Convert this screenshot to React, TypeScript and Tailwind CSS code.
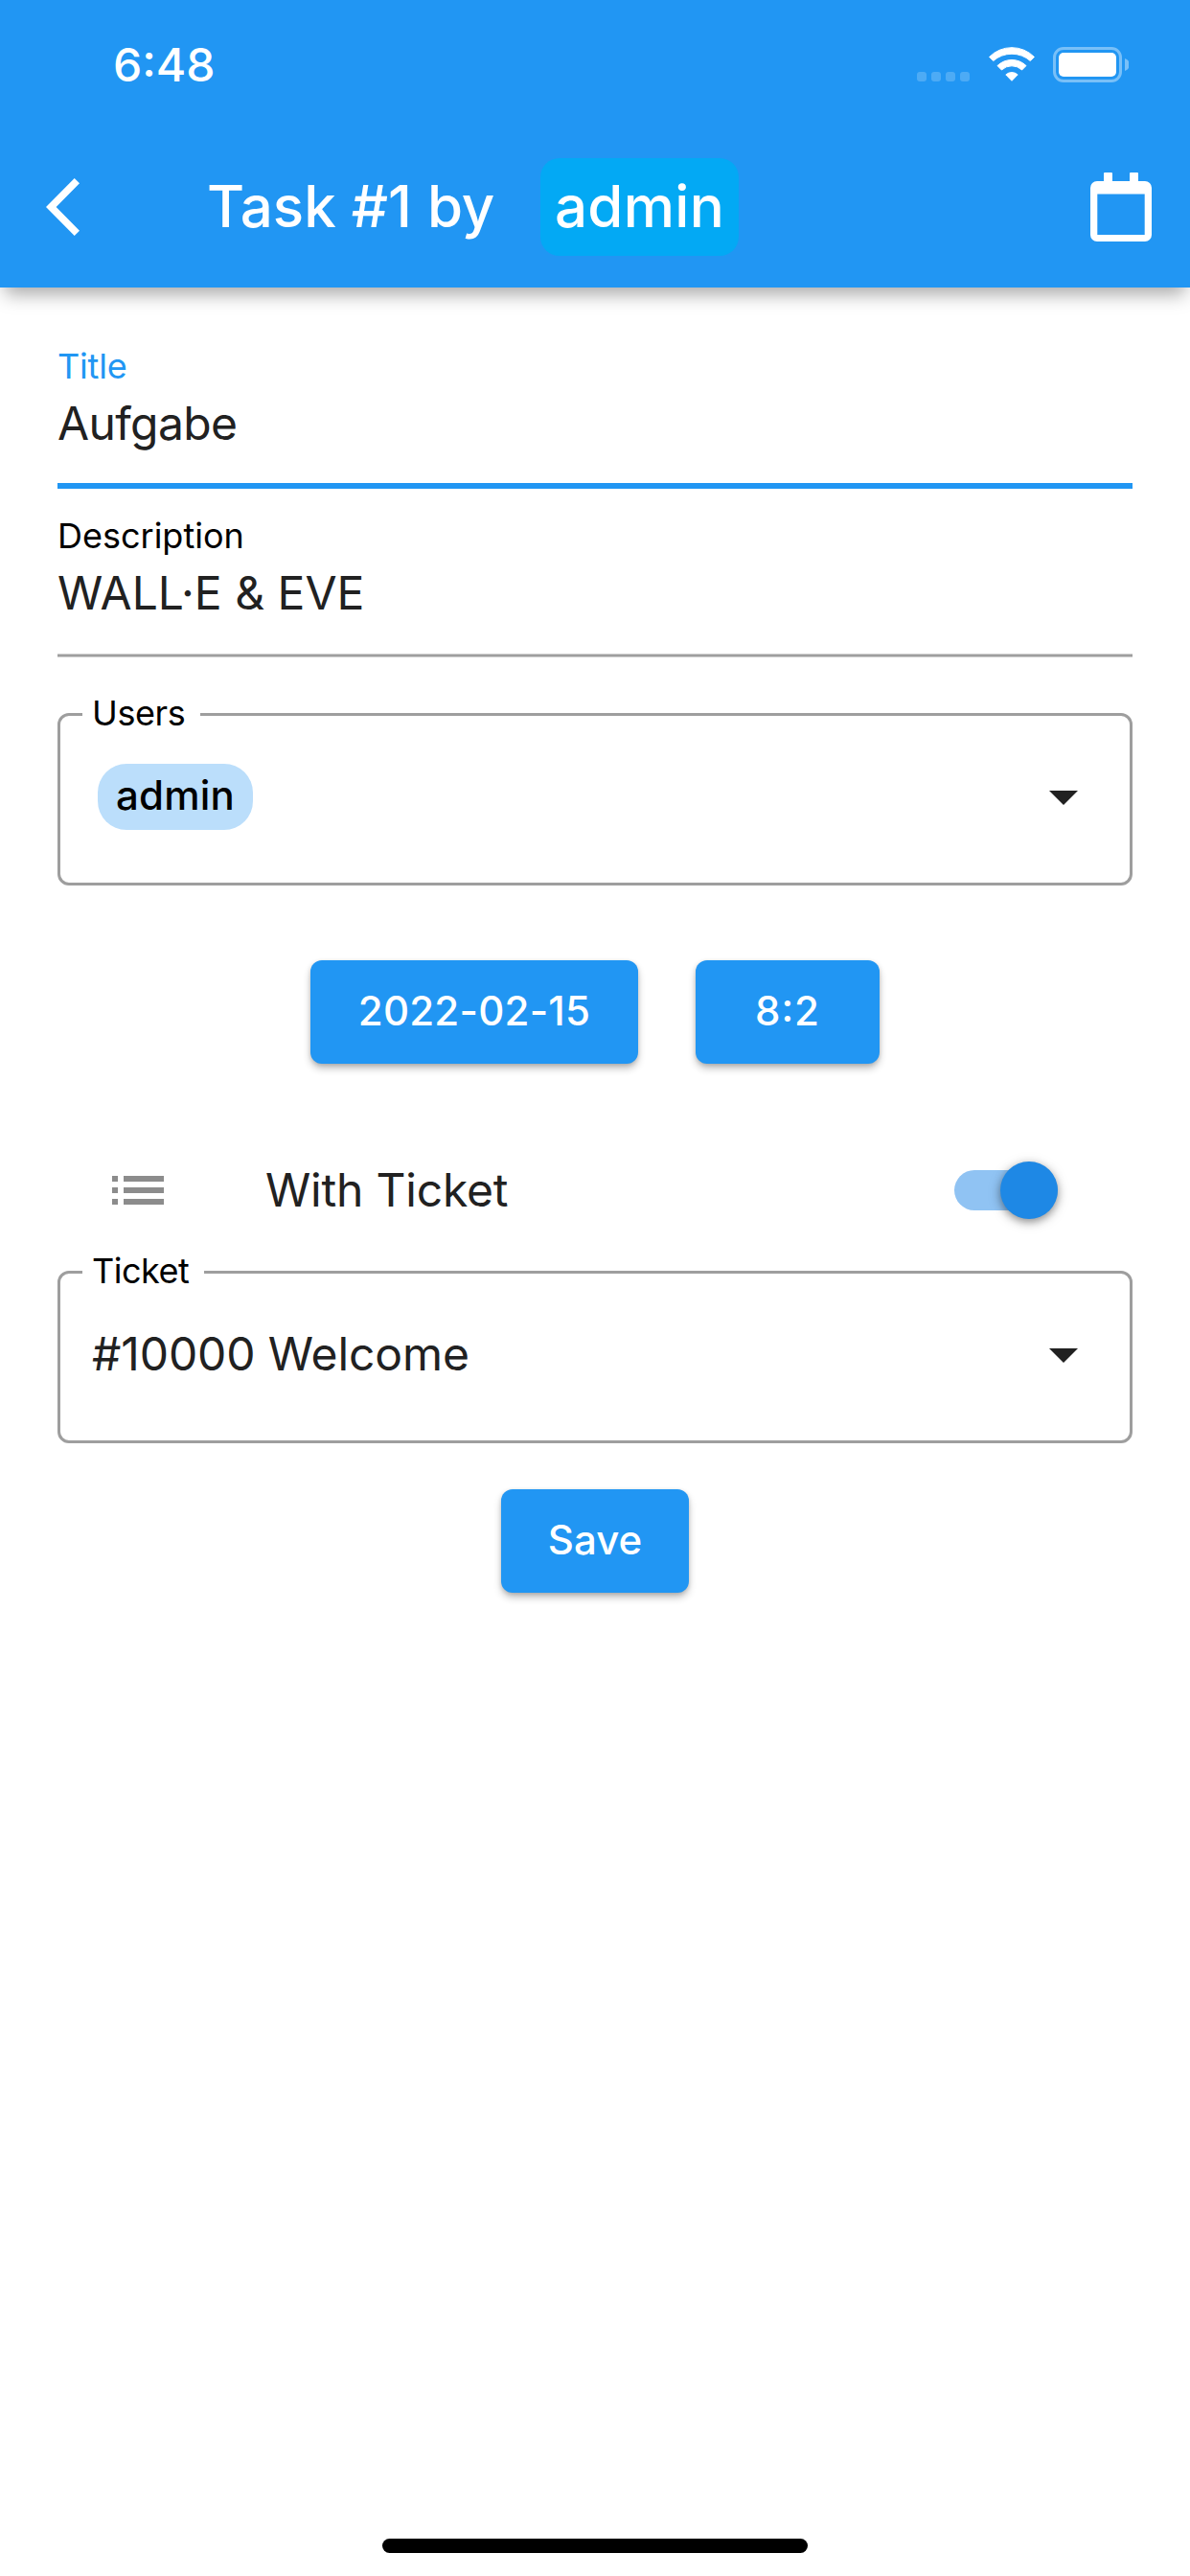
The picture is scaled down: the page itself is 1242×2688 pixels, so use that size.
import React from "react";

function WifiIcon() {
  return (
    <svg width="48" height="36" viewBox="0 0 48 36" fill="#fff" stroke="#fff" strokeWidth="1" strokeLinejoin="round">
      <path d="M.6 10.4A33 33 0 0 1 47.4 10.4L43.3 14.5A29.3 29.3 0 0 0 4.7 14.5Z" />
      <path d="M9 19.6A21.4 21.4 0 0 1 39 19.6L34.6 24A15.4 15.4 0 0 0 13.4 24Z" />
      <path d="M17.8 28.9A9.5 9.5 0 0 1 30.2 28.9L24 35.3Z" />
    </svg>
  );
}

function BatteryIcon() {
  return (
    <svg width="79" height="37" viewBox="0 0 79 37" fill="none">
      <rect x="1.5" y="1.5" width="69" height="34" rx="9.5" stroke="#fff" strokeOpacity=".4" strokeWidth="3" />
      <rect x="6" y="6" width="60" height="25" rx="5" fill="#fff" />
      <path d="M75 12A6.8 6.8 0 0 1 75 25Z" fill="#fff" fillOpacity=".4" />
    </svg>
  );
}

function BackIcon() {
  return (
    <svg width="35" height="60" viewBox="0 0 35 60" fill="#fff">
      <path d="M29.7 0L35 5.3L10.6 30L35 54.7L29.7 60L0 30Z" />
    </svg>
  );
}

function CalendarIcon() {
  return (
    <svg width="64" height="72" viewBox="0 0 64 72" fill="#fff">
      <path d="M14 1Q14 0 15 0H22Q23 0 23 1V9H41V1Q41 0 42 0H49Q50 0 50 1V9H57A7 7 0 0 1 64 16V65A7 7 0 0 1 57 72H7A7 7 0 0 1 0 65V16A7 7 0 0 1 7 9H14ZM7.3 22.4V65H56.7V22.4Z" fillRule="evenodd" />
    </svg>
  );
}

function ListIcon() {
  return (
    <svg width="54" height="30" viewBox="0 0 54 30" fill="#8c8c8c">
      <path d="M0 0h6v6H0zM12 0h42v6H12zM0 12h6v6H0zM12 12h42v6H12zM0 24h6v6H0zM12 24h42v6H12z" />
    </svg>
  );
}

function DropdownArrow() {
  return (
    <svg className="mt-12 mr-[33px] ml-auto" width="72" height="72" viewBox="0 0 24 24" fill="#212121">
      <path d="M7 10l5 5 5-5z" />
    </svg>
  );
}

function OutlinedSelect({
  label,
  labelClass,
  className,
  children,
}: {
  label: string;
  labelClass: string;
  className: string;
  children: React.ReactNode;
}) {
  return (
    <div className={`relative flex h-[180px] items-start rounded-xl border-3 border-[#9e9e9e] ${className}`}>
      <span className={`absolute -top-[25px] left-[23px] bg-white pl-2.5 text-[36px] leading-[44px] text-black ${labelClass}`}>
        {label}
      </span>
      {children}
      <DropdownArrow />
    </div>
  );
}

function RaisedButton({ className, children }: { className: string; children: React.ReactNode }) {
  return (
    <button
      className={`flex h-[108px] justify-center rounded-xl bg-[#2196f3] pt-[27px] text-[42px] leading-[51px] font-medium text-white shadow-[0_5px_8px_-1px_rgba(0,0,0,0.3),0_1px_4px_rgba(0,0,0,0.12)] ${className}`}
    >
      {children}
    </button>
  );
}

export default function App() {
  return (
    <div className="flex h-[2688px] w-[1242px] flex-col bg-white font-['Inter',sans-serif] text-[#212121]">
      <header className="h-[300px] shrink-0 bg-[#2196f3] text-white shadow-[0_12px_18px_-5px_rgba(0,0,0,0.34)]">
        <div className="flex h-[132px] items-start pr-16 pl-[118px]">
          <span className="mt-[38px] text-[48px] leading-[59px] font-medium">6:48</span>
          <div className="mt-[75px] ml-auto flex gap-[5px]">
            {[0, 1, 2, 3].map((i) => (
              <span key={i} className="size-2.5 rounded-[3px] bg-white/20" />
            ))}
          </div>
          <div className="mt-[49px] ml-[19.5px] flex items-start gap-[19.5px]">
            <WifiIcon />
            <BatteryIcon />
          </div>
        </div>
        <div className="flex h-[168px] items-center pr-10 pl-12">
          <BackIcon />
          <h1 className="mb-0.5 ml-[133px] w-[348px] text-[60px] leading-[72px] font-medium">Task #1 by</h1>
          <span className="h-[102px] w-[207px] rounded-[20px] bg-[#03a9f4] pt-3.5 pl-[15px] text-[60px] leading-[72px] font-medium tracking-[0.3px]">
            admin
          </span>
          <div className="ml-auto">
            <CalendarIcon />
          </div>
        </div>
      </header>

      <main className="flex flex-col px-[60px] pt-[60px]">
        <label className="flex flex-col border-b-6 border-[#2196f3] pb-[33px]">
          <span className="text-[36px] leading-[44px] tracking-[-0.2px] text-[#2196f3]">Title</span>
          <span className="mt-2 text-[48px] leading-[59px] tracking-[-0.6px]">Aufgabe</span>
        </label>
        <label className="mt-[27px] flex flex-col">
          <span className="text-[36px] leading-[44px] text-black">Description</span>
          <span className="mt-2 text-[48px] leading-[59px]">WALL·E &amp; EVE</span>
          <span className="mt-[34px] h-1 border-y border-[#cecece] bg-[#9e9e9e]" />
        </label>

        <OutlinedSelect label="Users" labelClass="w-[123px] tracking-[-0.4px]" className="mt-[58px]">
          <span className="mt-[49.5px] ml-[39px] h-[69px] w-[162px] rounded-[30px] bg-[#bbdefb] pt-[7.5px] pl-[19px] text-[42px] leading-[51px] font-medium tracking-[0.2px] text-black">
            admin
          </span>
        </OutlinedSelect>

        <div className="mt-[78px] flex justify-center gap-[60px]">
          <RaisedButton className="w-[342px] tracking-[0.25px]">2022-02-15</RaisedButton>
          <RaisedButton className="w-[192px] tracking-[0.9px] [font-feature-settings:'calt'_1]">8:2</RaisedButton>
        </div>

        <div className="mt-[102px] flex h-[60px] items-center pr-[78px] pl-[57px]">
          <ListIcon />
          <span className="mb-px ml-[106px] text-[48px] leading-[59px] tracking-[-0.2px]">With Ticket</span>
          <div className="ml-auto flex h-[42px] w-[108px] items-center justify-end rounded-full bg-[#90c3f3]">
            <span className="size-[60px] shrink-0 rounded-full bg-[#1e88e5] shadow-[0_3px_8px_rgba(0,0,0,0.38),0_3px_16px_rgba(0,0,0,0.12)]" />
          </div>
        </div>

        <OutlinedSelect label="Ticket" labelClass="w-[127px] tracking-[-0.5px]" className="mt-[54px]">
          <span className="mt-[54px] ml-[33px] text-[48px] leading-[59px] tracking-[-0.1px]">#10000 Welcome</span>
        </OutlinedSelect>

        <RaisedButton className="mt-12 w-[196px] self-center">Save</RaisedButton>
      </main>

      <div className="mt-auto mb-6 h-[15px] w-[444px] self-center rounded-full bg-black" />
    </div>
  );
}
